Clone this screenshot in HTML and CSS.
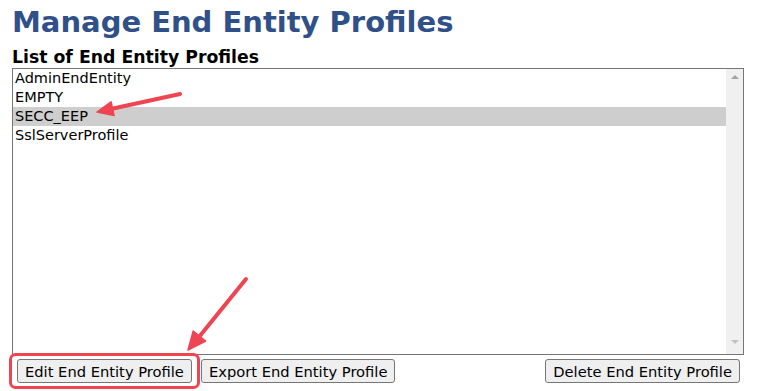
FILE: index.html
```html
<!DOCTYPE html>
<html>
<head>
<meta charset="utf-8">
<link rel="stylesheet" href="styles.css">
</head>
<body>
<div class="page">
  <h1 class="title">Manage End Entity Profiles</h1>
  <h2 class="subtitle">List of End Entity Profiles</h2>
  <div class="listbox">
    <ul class="options">
      <li class="option">AdminEndEntity</li>
      <li class="option">EMPTY</li>
      <li class="option selected">SECC_EEP</li>
      <li class="option">SslServerProfile</li>
    </ul>
    <div class="scrollbar">
      <span class="arrow up"></span>
      <span class="arrow down"></span>
    </div>
  </div>
  <div class="actions">
    <div class="left-actions">
      <button class="btn">Edit End Entity Profile</button>
      <button class="btn">Export End Entity Profile</button>
    </div>
    <button class="btn">Delete End Entity Profile</button>
  </div>
</div>
<svg class="annotations" width="776" height="391" viewBox="0 0 776 391">
  <rect x="10.5" y="354.5" width="188" height="33" rx="5" ry="5" fill="none" stroke="#ef4452" stroke-width="3"/>
  <line x1="180" y1="94" x2="112" y2="108.8" stroke="#ef4452" stroke-width="4" stroke-linecap="round"/>
  <polygon points="97,112 114.1,115.6 111.1,101.8" fill="#ef4452" stroke="#ef4452" stroke-width="1.5" stroke-linejoin="round"/>
  <line x1="246" y1="279" x2="199" y2="337" stroke="#ef4452" stroke-width="4" stroke-linecap="round"/>
  <polygon points="188,350 205.6,341.2 193.2,331" fill="#ef4452" stroke="#ef4452" stroke-width="1.5" stroke-linejoin="round"/>
</svg>
</body>
</html>
```

FILE: styles.css
```css
html, body {
  margin: 0;
  padding: 0;
  background: #ffffff;
}

body {
  width: 776px;
  height: 391px;
  position: relative;
  overflow: hidden;
  font-family: "DejaVu Sans", Verdana, sans-serif;
  color: #000;
}

.page {
  padding: 5px 0 0 12px;
  width: 732px;
}

.title {
  margin: 0;
  font-size: 29px;
  line-height: 34px;
  font-weight: bold;
  color: #30508a;
}

.subtitle {
  margin: 8px 0 1px 0;
  font-size: 17.3px;
  line-height: 20px;
  font-weight: bold;
  color: #000;
}

.listbox {
  display: flex;
  height: 285px;
  border: 1px solid #767676;
  background: #fff;
}

.options {
  flex: 1;
  list-style: none;
  margin: 0;
  padding: 0;
}

.option {
  font-size: 14.5px;
  line-height: 19px;
  padding-left: 2px;
  white-space: nowrap;
}

.option.selected {
  background: #cecece;
}

.scrollbar {
  width: 17px;
  background: #f0f0f0;
  display: flex;
  flex-direction: column;
  justify-content: space-between;
  align-items: center;
  padding: 6px 0 10px 0;
}

.arrow {
  width: 0;
  height: 0;
  border-left: 4px solid transparent;
  border-right: 4px solid transparent;
}

.arrow.up {
  border-bottom: 4px solid #a3a3a3;
}

.arrow.down {
  border-top: 4px solid #c2c2c2;
}

.actions {
  display: flex;
  justify-content: space-between;
  margin-top: 4px;
  padding: 0 4px 0 5px;
}

.left-actions {
  display: flex;
  gap: 9px;
}

.btn {
  font-family: "DejaVu Sans", Verdana, sans-serif;
  font-size: 14.7px;
  line-height: 21px;
  height: 24px;
  padding: 0 7px;
  border: 1px solid #767676;
  border-radius: 3px;
  background: #efefef;
  color: #000;
  white-space: nowrap;
}

.annotations {
  position: absolute;
  left: 0;
  top: 0;
  pointer-events: none;
}
```
